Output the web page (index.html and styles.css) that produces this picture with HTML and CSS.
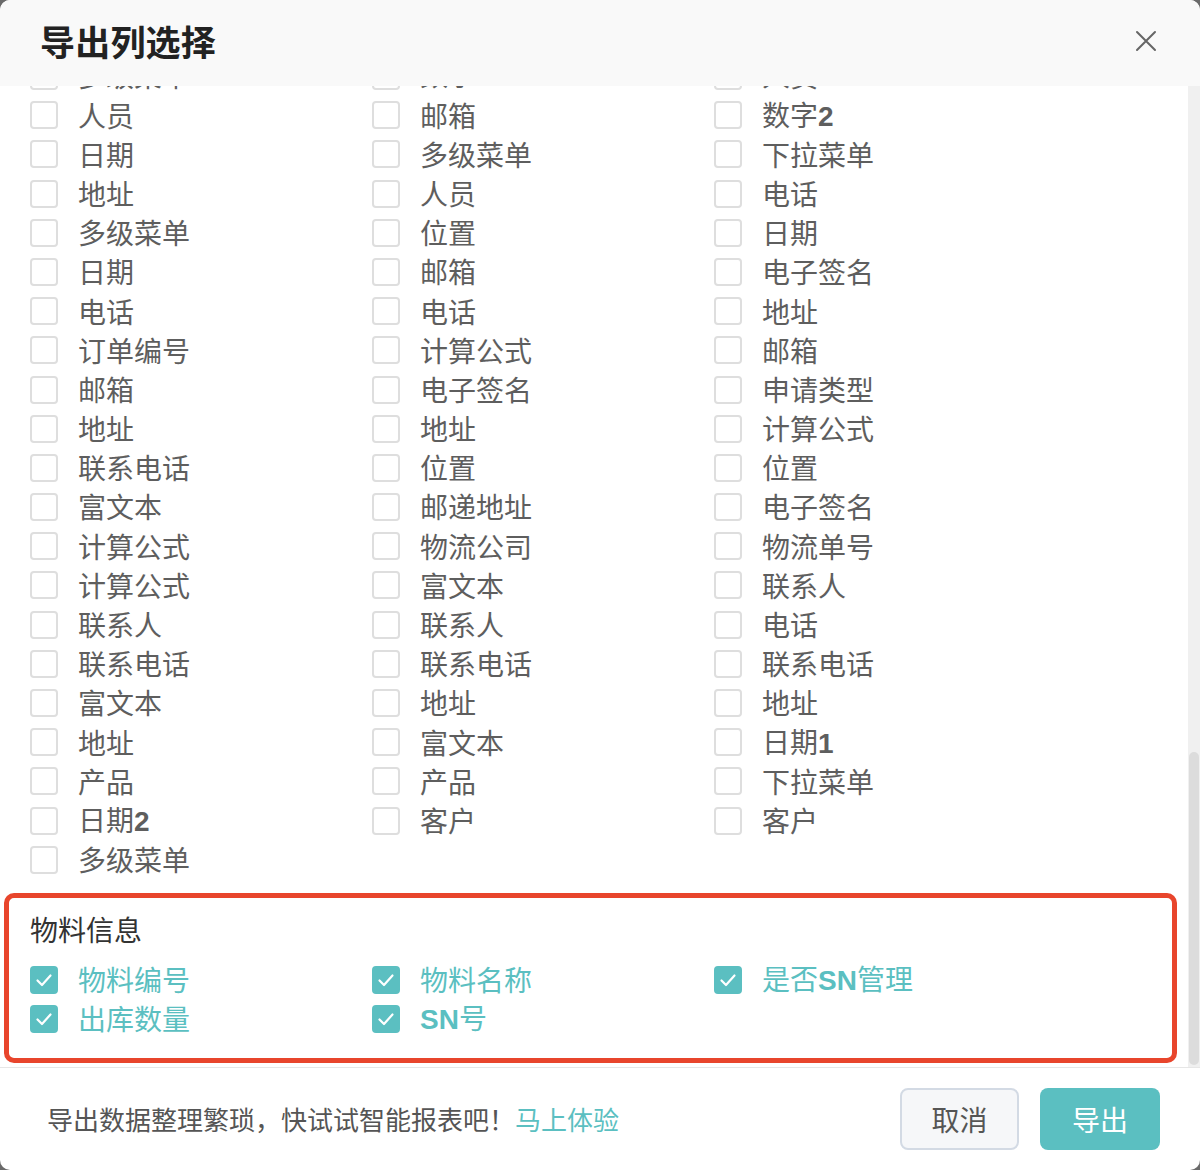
FILE: index.html
```html
<!DOCTYPE html>
<html lang="zh-CN">
<head>
<meta charset="utf-8">
<title>导出列选择</title>
<link rel="stylesheet" href="styles.css">
</head>
<body>
<div class="dialog">
  <header class="dlg-head">
    <h1 class="dlg-title">导出列选择</h1>
    <button class="dlg-close" aria-label="关闭">
      <svg viewBox="0 0 24 24" width="24" height="24"><path d="M3 3 L21 21 M21 3 L3 21" stroke="#666" stroke-width="2" fill="none" stroke-linecap="round"/></svg>
    </button>
  </header>
  <div class="dlg-body">
    <div class="scroll">
      <div class="list grid3">
        <label class="item"><span class="cb"></span><span class="txt">多级菜单</span></label>
        <label class="item"><span class="cb"></span><span class="txt">数字<span class="lat">1</span></span></label>
        <label class="item"><span class="cb"></span><span class="txt">人员</span></label>

        <label class="item"><span class="cb"></span><span class="txt">人员</span></label>
        <label class="item"><span class="cb"></span><span class="txt">邮箱</span></label>
        <label class="item"><span class="cb"></span><span class="txt">数字<span class="lat">2</span></span></label>

        <label class="item"><span class="cb"></span><span class="txt">日期</span></label>
        <label class="item"><span class="cb"></span><span class="txt">多级菜单</span></label>
        <label class="item"><span class="cb"></span><span class="txt">下拉菜单</span></label>

        <label class="item"><span class="cb"></span><span class="txt">地址</span></label>
        <label class="item"><span class="cb"></span><span class="txt">人员</span></label>
        <label class="item"><span class="cb"></span><span class="txt">电话</span></label>

        <label class="item"><span class="cb"></span><span class="txt">多级菜单</span></label>
        <label class="item"><span class="cb"></span><span class="txt">位置</span></label>
        <label class="item"><span class="cb"></span><span class="txt">日期</span></label>

        <label class="item"><span class="cb"></span><span class="txt">日期</span></label>
        <label class="item"><span class="cb"></span><span class="txt">邮箱</span></label>
        <label class="item"><span class="cb"></span><span class="txt">电子签名</span></label>

        <label class="item"><span class="cb"></span><span class="txt">电话</span></label>
        <label class="item"><span class="cb"></span><span class="txt">电话</span></label>
        <label class="item"><span class="cb"></span><span class="txt">地址</span></label>

        <label class="item"><span class="cb"></span><span class="txt">订单编号</span></label>
        <label class="item"><span class="cb"></span><span class="txt">计算公式</span></label>
        <label class="item"><span class="cb"></span><span class="txt">邮箱</span></label>

        <label class="item"><span class="cb"></span><span class="txt">邮箱</span></label>
        <label class="item"><span class="cb"></span><span class="txt">电子签名</span></label>
        <label class="item"><span class="cb"></span><span class="txt">申请类型</span></label>

        <label class="item"><span class="cb"></span><span class="txt">地址</span></label>
        <label class="item"><span class="cb"></span><span class="txt">地址</span></label>
        <label class="item"><span class="cb"></span><span class="txt">计算公式</span></label>

        <label class="item"><span class="cb"></span><span class="txt">联系电话</span></label>
        <label class="item"><span class="cb"></span><span class="txt">位置</span></label>
        <label class="item"><span class="cb"></span><span class="txt">位置</span></label>

        <label class="item"><span class="cb"></span><span class="txt">富文本</span></label>
        <label class="item"><span class="cb"></span><span class="txt">邮递地址</span></label>
        <label class="item"><span class="cb"></span><span class="txt">电子签名</span></label>

        <label class="item"><span class="cb"></span><span class="txt">计算公式</span></label>
        <label class="item"><span class="cb"></span><span class="txt">物流公司</span></label>
        <label class="item"><span class="cb"></span><span class="txt">物流单号</span></label>

        <label class="item"><span class="cb"></span><span class="txt">计算公式</span></label>
        <label class="item"><span class="cb"></span><span class="txt">富文本</span></label>
        <label class="item"><span class="cb"></span><span class="txt">联系人</span></label>

        <label class="item"><span class="cb"></span><span class="txt">联系人</span></label>
        <label class="item"><span class="cb"></span><span class="txt">联系人</span></label>
        <label class="item"><span class="cb"></span><span class="txt">电话</span></label>

        <label class="item"><span class="cb"></span><span class="txt">联系电话</span></label>
        <label class="item"><span class="cb"></span><span class="txt">联系电话</span></label>
        <label class="item"><span class="cb"></span><span class="txt">联系电话</span></label>

        <label class="item"><span class="cb"></span><span class="txt">富文本</span></label>
        <label class="item"><span class="cb"></span><span class="txt">地址</span></label>
        <label class="item"><span class="cb"></span><span class="txt">地址</span></label>

        <label class="item"><span class="cb"></span><span class="txt">地址</span></label>
        <label class="item"><span class="cb"></span><span class="txt">富文本</span></label>
        <label class="item"><span class="cb"></span><span class="txt">日期<span class="lat">1</span></span></label>

        <label class="item"><span class="cb"></span><span class="txt">产品</span></label>
        <label class="item"><span class="cb"></span><span class="txt">产品</span></label>
        <label class="item"><span class="cb"></span><span class="txt">下拉菜单</span></label>

        <label class="item"><span class="cb"></span><span class="txt">日期<span class="lat">2</span></span></label>
        <label class="item"><span class="cb"></span><span class="txt">客户</span></label>
        <label class="item"><span class="cb"></span><span class="txt">客户</span></label>

        <label class="item"><span class="cb"></span><span class="txt">多级菜单</span></label>
      </div>

      <section class="group marked">
        <h2 class="group-title">物料信息</h2>
        <div class="grid3">
          <label class="item on"><span class="cb"><svg viewBox="0 0 28 28" width="28" height="28"><path d="M7.5 14.5 L12 19 L20.5 9.5" stroke="#fff" stroke-width="2.2" fill="none" stroke-linecap="round" stroke-linejoin="round"/></svg></span><span class="txt">物料编号</span></label>
          <label class="item on"><span class="cb"><svg viewBox="0 0 28 28" width="28" height="28"><path d="M7.5 14.5 L12 19 L20.5 9.5" stroke="#fff" stroke-width="2.2" fill="none" stroke-linecap="round" stroke-linejoin="round"/></svg></span><span class="txt">物料名称</span></label>
          <label class="item on"><span class="cb"><svg viewBox="0 0 28 28" width="28" height="28"><path d="M7.5 14.5 L12 19 L20.5 9.5" stroke="#fff" stroke-width="2.2" fill="none" stroke-linecap="round" stroke-linejoin="round"/></svg></span><span class="txt">是否<span class="lat">SN</span>管理</span></label>
          <label class="item on"><span class="cb"><svg viewBox="0 0 28 28" width="28" height="28"><path d="M7.5 14.5 L12 19 L20.5 9.5" stroke="#fff" stroke-width="2.2" fill="none" stroke-linecap="round" stroke-linejoin="round"/></svg></span><span class="txt">出库数量</span></label>
          <label class="item on"><span class="cb"><svg viewBox="0 0 28 28" width="28" height="28"><path d="M7.5 14.5 L12 19 L20.5 9.5" stroke="#fff" stroke-width="2.2" fill="none" stroke-linecap="round" stroke-linejoin="round"/></svg></span><span class="txt"><span class="lat">SN</span>号</span></label>
        </div>
      </section>
    </div>
    <div class="scrollbar"><div class="thumb"></div></div>
  </div>
  <footer class="dlg-foot">
    <p class="tip">导出数据整理繁琐，快试试智能报表吧！<a class="tip-link">马上体验</a></p>
    <div class="actions">
      <button class="btn btn-cancel">取消</button>
      <button class="btn btn-primary">导出</button>
    </div>
  </footer>
</div>
</body>
</html>
```

FILE: styles.css
```css
* { box-sizing: border-box; }

html, body {
  margin: 0;
  padding: 0;
  background: #6a6a6a;
}

body {
  font-family: "Noto Sans CJK SC", "Noto Sans", sans-serif;
  color: #5a5a5a;
}

.dialog {
  width: 1200px;
  height: 1170px;
  background: #fff;
  border-radius: 10px;
  overflow: hidden;
  display: flex;
  flex-direction: column;
}

.dlg-head {
  height: 86px;
  flex: none;
  background: #f9f9f9;
  display: flex;
  align-items: center;
  justify-content: space-between;
  padding: 0 42px 4px 40px;
  position: relative;
  z-index: 1;
}

.dlg-title {
  margin: 0 0 2px;
  font-size: 35px;
  font-weight: 700;
  color: #222;
  line-height: 1;
  letter-spacing: 0.2px;
}

.dlg-close {
  border: 0;
  background: none;
  padding: 0;
  width: 24px;
  height: 24px;
  display: flex;
  cursor: pointer;
}

.dlg-body {
  height: 981px;
  flex: none;
  display: flex;
  overflow: hidden;
}

.scroll {
  flex: 1;
  overflow: hidden;
}

.grid3 {
  display: grid;
  grid-template-columns: repeat(3, 342px);
}

.list {
  margin-top: -29.6px;
  padding-left: 30px;
}

.item {
  display: flex;
  align-items: center;
  gap: 20px;
  height: 39.2px;
  font-size: 28px;
  line-height: 39.2px;
  color: #5e5e5e;
  white-space: nowrap;
}

.cb {
  flex: none;
  width: 28px;
  height: 28px;
  border: 2px solid #dedede;
  border-radius: 4px;
  background: #fff;
  display: flex;
  align-items: center;
  justify-content: center;
}

.item.on { color: #5bbfc1; }

.item.on .cb {
  background: #5bbfc1;
  border-color: #5bbfc1;
}

.item.on .cb svg { flex: none; }

.lat {
  font-family: "Liberation Sans", Arial, sans-serif;
  font-weight: 700;
}

.group {
  margin: 13.4px 11px 0 4px;
  padding: 12.4px 0 19.2px 21px;
}

.marked {
  border: 5px solid #e8452c;
  border-radius: 10px;
}

.group-title {
  margin: 0 0 10.8px;
  font-size: 28px;
  font-weight: 400;
  line-height: 39.2px;
  color: #333;
}

.scrollbar {
  width: 12px;
  flex: none;
  background: #f0f0f0;
  display: flex;
  flex-direction: column;
  justify-content: flex-end;
  padding: 0 1px 2px;
}

.thumb {
  height: 313px;
  background: #dcdcdc;
  border-radius: 5px;
}

.dlg-foot {
  flex: 1;
  border-top: 1px solid #e6e6e6;
  display: flex;
  align-items: center;
  justify-content: space-between;
  padding: 0 40px 0 47px;
}

.tip {
  margin: 0;
  font-size: 26px;
  color: #555;
  line-height: 1.4;
}

.tip-link {
  color: #5bbfc1;
  cursor: pointer;
}

.actions {
  display: flex;
  gap: 21px;
}

.btn {
  height: 62px;
  width: 119px;
  border-radius: 8px;
  font-family: inherit;
  font-size: 28px;
  padding: 0;
  cursor: pointer;
}

.btn-cancel {
  background: #f6f7f9;
  border: 2px solid #d3dae4;
  color: #555;
}

.btn-primary {
  width: 120px;
  background: #5bbfc1;
  border: 0;
  color: #fff;
}
```
